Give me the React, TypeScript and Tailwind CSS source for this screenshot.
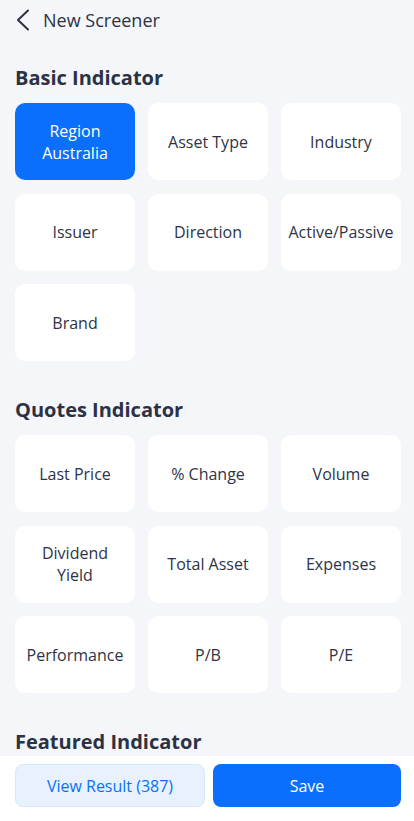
type Item = { label: string; sub?: string; active?: boolean };

const basic: Item[] = [
  { label: 'Region', sub: 'Australia', active: true },
  { label: 'Asset Type' },
  { label: 'Industry' },
  { label: 'Issuer' },
  { label: 'Direction' },
  { label: 'Active/Passive' },
  { label: 'Brand' },
];

const quotes: Item[] = [
  { label: 'Last Price' },
  { label: '% Change' },
  { label: 'Volume' },
  { label: 'Dividend', sub: 'Yield' },
  { label: 'Total Asset' },
  { label: 'Expenses' },
  { label: 'Performance' },
  { label: 'P/B' },
  { label: 'P/E' },
];

const featured: Item[] = [
  { label: 'Top Gainers' },
  { label: 'Top Losers' },
  { label: 'Most Active' },
];

function Section({ title, items, first }: { title: string; items: Item[]; first?: boolean }) {
  return (
    <section className={first ? 'mt-6' : 'mt-[35px]'}>
      <h2 className="text-[20px] leading-7 font-bold text-[#2b3244] mb-[11px]">{title}</h2>
      <div className="grid grid-cols-3 gap-x-[13px] gap-y-[13.5px]">
        {items.map((it) => (
          <button
            key={it.label}
            className={
              'h-[77px] rounded-[10px] flex flex-col items-center justify-center text-[16px] leading-[22px] ' +
              (it.active ? 'bg-[#0a6ffd] text-white' : 'bg-white text-[#2e3446]')
            }
          >
            <span>{it.label}</span>
            {it.sub && <span>{it.sub}</span>}
          </button>
        ))}
      </div>
    </section>
  );
}

export default function App() {
  return (
    <div
      className="min-h-screen bg-[#f5f6fa] pl-[15px] pr-[13px] pb-24"
      style={{ fontFamily: '"Open Sans", "Noto Sans", sans-serif' }}
    >
      <header className="h-10 flex items-center">
        <svg width="14" height="22" viewBox="0 0 14 22" className="ml-[1px] text-[#2b3244]">
          <polyline points="12,1.5 2,11 12,20.5" fill="none" stroke="currentColor" strokeWidth="2" strokeLinecap="round" strokeLinejoin="round" />
        </svg>
        <h1 className="ml-[13px] text-[18px] text-[#2b3244]">New Screener</h1>
      </header>

      <Section title="Basic Indicator" items={basic} first />
      <Section title="Quotes Indicator" items={quotes} />
      <Section title="Featured Indicator" items={featured} />

      {/* bottom action bar sits over the list */}
      <div className="fixed bottom-0 left-0 right-0 h-[65px] bg-white pl-[15px] pr-[13px] pt-2 flex gap-2">
        <button className="flex-1 h-[43px] rounded-lg bg-[#e7f2fe] border border-[#d6e8fc] text-[#0a6ffd] text-[16px]">
          View Result (387)
        </button>
        <button className="flex-1 h-[43px] rounded-lg bg-[#0a6ffd] text-white text-[16px]">Save</button>
      </div>
    </div>
  );
}
